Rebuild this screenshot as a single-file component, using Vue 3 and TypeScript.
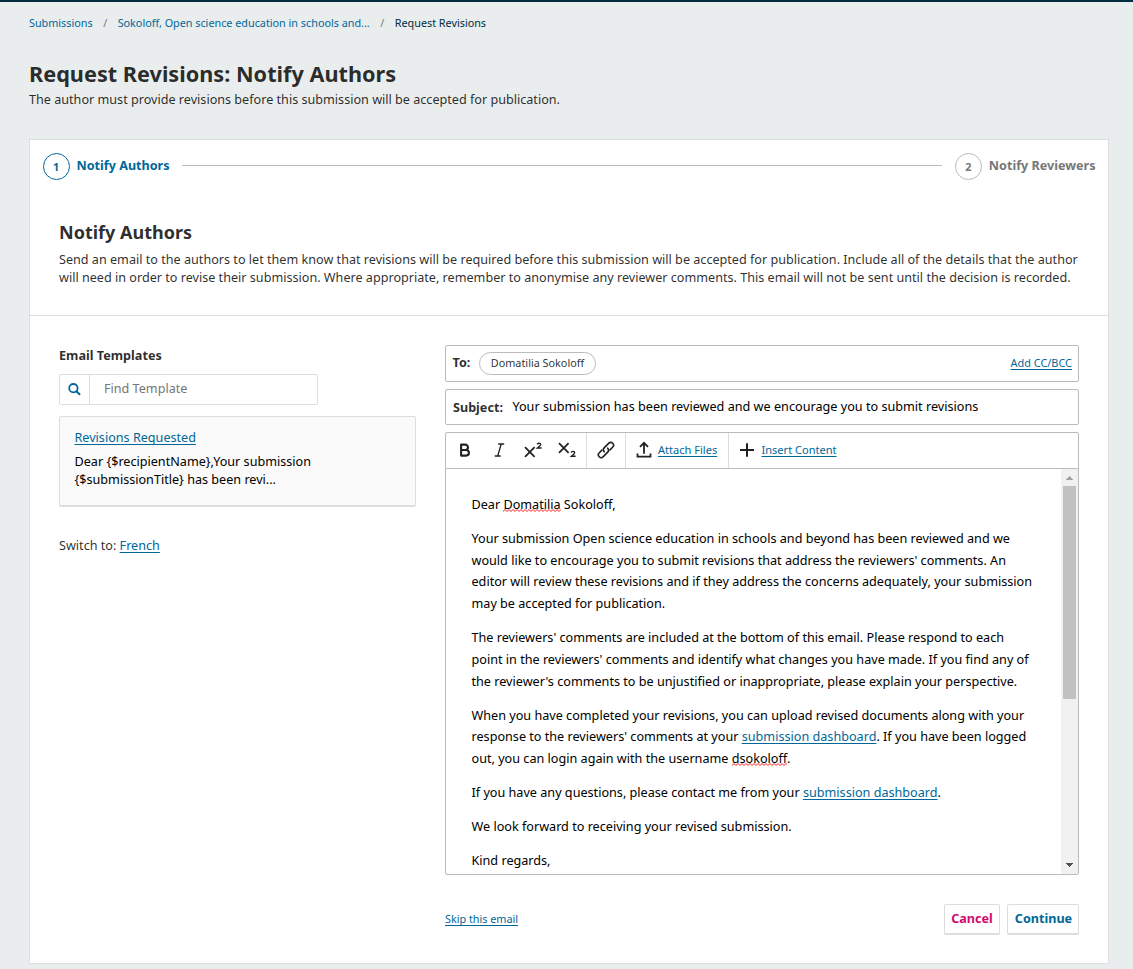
<script setup lang="ts">
interface Step { id: number; label: string; current: boolean }
const steps: Step[] = [
  { id: 1, label: 'Notify Authors', current: true },
  { id: 2, label: 'Notify Reviewers', current: false },
]
</script>

<template>
  <div class="page">
    <nav class="crumbs">
      <a>Submissions</a><i>/</i><a>Sokoloff, Open science education in schools and...</a><i>/</i><span>Request Revisions</span>
    </nav>
    <h1>Request Revisions: Notify Authors</h1>
    <p class="lead">The author must provide revisions before this submission will be accepted for publication.</p>

    <main class="card">
      <div class="steps">
        <template v-for="(s, i) in steps" :key="s.id">
          <div v-if="i > 0" class="rule"></div>
          <div class="step" :class="{ current: s.current }">
            <span class="num">{{ s.id }}</span><span class="steplabel">{{ s.label }}</span>
          </div>
        </template>
      </div>

      <header class="intro">
        <h2>Notify Authors</h2>
        <p>Send an email to the authors to let them know that revisions will be required before this submission will be accepted for publication. Include all of the details that the author<br>will need in order to revise their submission. Where appropriate, remember to anonymise any reviewer comments. This email will not be sent until the decision is recorded.</p>
      </header>

      <div class="cols">
        <aside>
          <h3>Email Templates</h3>
          <div class="search">
            <span class="mag">
              <svg width="13" height="13" viewBox="0 0 13 13"><circle cx="5.4" cy="5.2" r="4.2" fill="none" stroke="#006798" stroke-width="1.8" /><path d="M8.4 8.2 L11.5 11.3" stroke="#006798" stroke-width="2" stroke-linecap="round" /></svg>
            </span>
            <span class="find">Find Template</span>
          </div>
          <div class="template">
            <a>Revisions Requested</a>
            <p>Dear {$recipientName},Your submission<br>{$submissionTitle} has been revi...</p>
          </div>
          <p class="switch">Switch to: <a>French</a></p>
        </aside>

        <section class="composer">
          <div class="field to">
            <b>To:</b><span class="pill">Domatilia Sokoloff</span><a class="small cc">Add CC/BCC</a>
          </div>
          <div class="field subject">
            <b>Subject:</b><span>Your submission has been reviewed and we encourage you to submit revisions</span>
          </div>
          <div class="editor">
            <div class="toolbar">
              <div class="group format">
                <svg width="34" height="34" viewBox="0 0 34 34"><path d="M13.1 11.6 h4.2 a2.7 2.7 0 0 1 0 5.4 h-4.2 z M13.1 17 h5 a2.8 2.8 0 0 1 0 5.6 h-5 z" fill="none" stroke="#222" stroke-width="2.1" stroke-linejoin="round" /></svg>
                <svg width="34" height="34" viewBox="0 0 34 34"><path d="M16.2 11 h6 M12.7 23 h6 M19.2 11 L15.7 23" fill="none" stroke="#222" stroke-width="1.3" /></svg>
                <svg width="34" height="34" viewBox="0 0 34 34"><path d="M9 14.2 L18.6 23.8 M18.6 14.2 L9 23.8" stroke="#222" stroke-width="1.8" /><path d="M21 11.2 Q22.8 9.6 24.2 10.5 Q25.3 11.7 23.7 13 L21.4 15 H25.6" fill="none" stroke="#222" stroke-width="1.4" /></svg>
                <svg width="34" height="34" viewBox="0 0 34 34"><path d="M9 10.2 L18.6 19.8 M18.6 10.2 L9 19.8" stroke="#222" stroke-width="1.8" /><path d="M21 19.4 Q22.8 17.8 24.2 18.7 Q25.3 19.9 23.7 21.2 L21.4 23.2 H25.6" fill="none" stroke="#222" stroke-width="1.4" /></svg>
              </div>
              <div class="group link">
                <svg width="18" height="18" viewBox="0 0 18 18" fill="none" stroke="#222" stroke-width="1.6" stroke-linecap="round"><path d="M7.2 10.8 C5.8 9.2 6.2 7.8 7.4 6.6 L11.6 2.4 C13 1 14.6 1.1 15.7 2.2 C16.9 3.4 16.9 5 15.6 6.3 L13 8.9" /><path d="M10.7 7.2 C12.1 8.8 11.8 10.1 10.5 11.4 L6.3 15.6 C4.9 17 3.3 16.9 2.2 15.8 C1 14.6 1 13 2.3 11.7 L4.9 9.1" /></svg>
              </div>
              <div class="group attach">
                <svg width="16" height="17" viewBox="0 0 16 17" fill="none" stroke="#222" stroke-width="1.8"><path d="M8 12.7 V1.8 M4 5.8 L8 1.8 L12 5.8 M1.5 12.5 V15.7 H14.5 V12.5" /></svg>
                <a>Attach Files</a>
              </div>
              <div class="group insert">
                <svg width="14" height="14" viewBox="0 0 14 14"><path d="M7 0.3 V13.7 M0 7 H14" stroke="#222" stroke-width="2" /></svg>
                <a>Insert Content</a>
              </div>
            </div>
            <div class="body">
              <div class="mail">
                <p>Dear <span class="typo">Domatilia</span> Sokoloff,</p>
                <p>Your submission Open science education in schools and beyond has been reviewed and we<br>would like to encourage you to submit revisions that address the reviewers' comments. An<br>editor will review these revisions and if they address the concerns adequately, your submission<br>may be accepted for publication.</p>
                <p>The reviewers' comments are included at the bottom of this email. Please respond to each<br>point in the reviewers' comments and identify what changes you have made. If you find any of<br>the reviewer's comments to be unjustified or inappropriate, please explain your perspective.</p>
                <p>When you have completed your revisions, you can upload revised documents along with your<br>response to the reviewers' comments at your <a>submission dashboard</a>. If you have been logged<br>out, you can login again with the username <span class="typo">dsokoloff</span>.</p>
                <p>If you have any questions, please contact me from your <a>submission dashboard</a>.</p>
                <p>We look forward to receiving your revised submission.</p>
                <p>Kind regards,</p>
              </div>
              <div class="scrollbar">
                <svg class="up" width="7" height="4" viewBox="0 0 7 4" shape-rendering="crispEdges"><path d="M3 0h1v1h1v1h1v1h1v1H0V3h1V2h1V1h1z" fill="#a3a3a3" /></svg>
                <div class="thumb"></div>
                <svg class="down" width="7" height="4" viewBox="0 0 7 4" shape-rendering="crispEdges"><path d="M0 0h7v1H6v1H5v1H4v1H3V3H2V2H1V1H0z" fill="#505050" /></svg>
              </div>
            </div>
          </div>
          <footer>
            <a class="small">Skip this email</a>
            <div class="buttons"><button class="cancel">Cancel</button><button>Continue</button></div>
          </footer>
        </section>
      </div>
    </main>
  </div>
</template>

<style>
body { background: #eaeded; }
</style>

<style scoped>
* { box-sizing: border-box; }
.page { height: 969px; overflow: hidden; border-top: 2px solid #002c40; padding: 0 24px 0 29px; background: #eaeded; font: 12.62px/18px "Noto Sans", sans-serif; color: rgba(0, 0, 0, 0.84); white-space: nowrap; }
p, h1, h2, h3 { margin: 0; }
a { color: #006798; text-decoration: underline; text-underline-offset: 1.5px; text-decoration-skip-ink: none; }
.small { font-size: 10.8px; }
.crumbs { display: flex; height: 18px; margin-top: 12px; font-size: 10.8px; }
.crumbs a { text-decoration: none; }
.crumbs i { font-style: normal; width: 25px; text-align: center; color: #777; }
.crumbs span { color: #002c40; }
h1 { margin-top: 28px; font-size: 21.68px; line-height: 28px; font-weight: 700; }
.lead { margin-top: 3px; }
.card { width: 1080px; height: 825px; margin-top: 30px; background: #fff; border: 1px solid #ddd; }
.steps { display: flex; align-items: center; height: 27px; margin: 13px 12.5px 0 13px; }
.step { display: flex; align-items: center; gap: 6.5px; font-weight: 700; font-size: 12.6px; color: #777; }
.num { width: 27px; height: 27px; padding-right: 1px; border: 1px solid #bbb; border-radius: 50%; text-align: center; font-size: 10.8px; line-height: 25px; }
.steplabel { position: relative; top: -1px; }
.step.current { color: #006798; }
.step.current .num { border-color: #006798; }
.rule { flex: 1; height: 1px; background: #bbb; margin: 0 13px 2px 12px; }
.intro { height: 136px; padding: 41px 29px 0; border-bottom: 1px solid #ddd; }
h2 { font-size: 18px; line-height: 22px; font-weight: 700; }
.intro p { margin-top: 8px; }
.cols { display: flex; padding: 29px 29px 0; }
aside { width: 386px; }
h3 { font-size: 12.65px; line-height: 20px; font-weight: 700; }
.search { display: flex; width: 259px; height: 31px; margin-top: 9px; border: 1px solid #ddd; border-radius: 2px; }
.mag { display: flex; align-items: center; justify-content: center; width: 30px; padding-bottom: 1px; border-right: 1px solid #ddd; }
.find { padding-left: 14px; line-height: 28px; color: #777; }
.template { width: 357px; height: 91px; margin-top: 11px; padding: 12px 14.5px; border: 1px solid #ddd; border-bottom-width: 2px; border-radius: 2px; background: #fafafa; color: #000; }
.template p { margin-top: 6px; }
.switch { margin-top: 30px; }
.composer { width: 634px; }
.field { display: flex; align-items: center; height: 36px; border: 1px solid #bbb; border-radius: 2px; }
.to { height: 37px; padding: 0 6px 2px 6.5px; }
.pill { height: 23px; margin: 1px 0 0 8.5px; padding: 0 11px; border: 1px solid #bbb; border-radius: 12px; font-size: 10.82px; line-height: 20px; }
.cc { margin-left: auto; font-size: 10.9px; }
.subject { margin-top: 7px; padding: 1px 0 0 7px; }
.subject b { position: relative; top: 0.5px; }
.subject span { margin-left: 9.5px; color: #000; font-size: 12.65px; position: relative; top: -1.5px; }
.editor { height: 443px; margin-top: 7px; border: 1px solid #bbb; border-radius: 2px; }
.toolbar { display: flex; height: 36px; border-bottom: 1px solid #bbb; }
.group { display: flex; align-items: center; padding-bottom: 2px; border-right: 1px solid #ddd; }
.group:last-child { border: 0; }
.group a { font-size: 11.05px; }
.format { width: 141px; padding-left: 2px; }
.format svg { flex: none; }
.link { width: 39px; justify-content: center; }
.attach { width: 103px; padding-left: 10px; gap: 6px; }
.insert { padding-left: 11px; gap: 7.5px; }
.body { display: flex; height: 405px; overflow: hidden; }
.mail { flex: 1; padding: 25px 0 0 25.5px; color: #000; font-size: 12.63px; line-height: 21.8px; }
.mail p { margin-bottom: 12.1px; }
.typo { background: url("data:image/svg+xml,%3Csvg xmlns='http://www.w3.org/2000/svg' width='4' height='3'%3E%3Cpath d='M-1 1.5L0 2.5L2 .5L4 2.5L5 1.5' fill='none' stroke='%23f00' stroke-width='.9'/%3E%3C/svg%3E") left bottom 1px repeat-x; }
.scrollbar { width: 17px; background: #f1f1f1; display: flex; flex-direction: column; align-items: center; }
.up { margin-top: 7px; }
.thumb { width: 13px; height: 213px; margin-top: 6px; background: #c1c1c1; }
.down { margin-top: auto; margin-bottom: 7px; }
footer { display: flex; justify-content: space-between; align-items: center; height: 31px; margin-top: 29px; }
footer .small { padding-bottom: 2px; }
.buttons { display: flex; gap: 7px; }
button { width: 72px; height: 31px; padding: 0 0 1px 1px; text-align: center; border: 1px solid #ddd; border-bottom-width: 2px; border-radius: 2px; background: #fff; color: #006798; font: 700 12.6px/18px "Noto Sans", sans-serif; }
.cancel { width: 56px; padding-left: 0; color: #d00a6c; }
</style>
